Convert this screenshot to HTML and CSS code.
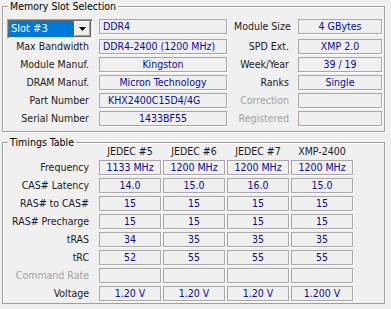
FILE: index.html
```html
<!DOCTYPE html>
<html>
<head>
<meta charset="utf-8">
<link rel="stylesheet" href="styles.css">
</head>
<body>
<fieldset class="group slot-group">
  <legend class="group-title">Memory Slot Selection</legend>
  <div class="slot-grid">
    <div class="combo">
      <span class="combo-value">Slot #3</span>
      <span class="combo-btn"><svg width="7" height="4" viewBox="0 0 7 4"><polygon points="0,0 7,0 3.5,4" fill="#000"/></svg></span>
    </div>
    <div class="field field-left">DDR4</div>
    <div class="label label-right">Module Size</div>
    <div class="field">4 GBytes</div>

    <div class="label">Max Bandwidth</div>
    <div class="field field-left">DDR4-2400 (1200 MHz)</div>
    <div class="label label-right">SPD Ext.</div>
    <div class="field">XMP 2.0</div>

    <div class="label">Module Manuf.</div>
    <div class="field">Kingston</div>
    <div class="label label-right">Week/Year</div>
    <div class="field">39 / 19</div>

    <div class="label">DRAM Manuf.</div>
    <div class="field">Micron Technology</div>
    <div class="label label-right">Ranks</div>
    <div class="field">Single</div>

    <div class="label">Part Number</div>
    <div class="field field-part">KHX2400C15D4/4G</div>
    <div class="label label-right disabled">Correction</div>
    <div class="field"></div>

    <div class="label">Serial Number</div>
    <div class="field">1433BF55</div>
    <div class="label label-right disabled">Registered</div>
    <div class="field"></div>
  </div>
</fieldset>

<fieldset class="group timings-group">
  <legend class="group-title">Timings Table</legend>
  <div class="timings-grid">
    <div class="head-spacer"></div>
    <div class="col-head">JEDEC #5</div>
    <div class="col-head">JEDEC #6</div>
    <div class="col-head">JEDEC #7</div>
    <div class="col-head">XMP-2400</div>

    <div class="label label-timing">Frequency</div>
    <div class="field">1133 MHz</div>
    <div class="field">1200 MHz</div>
    <div class="field">1200 MHz</div>
    <div class="field">1200 MHz</div>

    <div class="label label-timing">CAS# Latency</div>
    <div class="field">14.0</div>
    <div class="field">15.0</div>
    <div class="field">16.0</div>
    <div class="field">15.0</div>

    <div class="label label-timing">RAS# to CAS#</div>
    <div class="field">15</div>
    <div class="field">15</div>
    <div class="field">15</div>
    <div class="field">15</div>

    <div class="label label-timing">RAS# Precharge</div>
    <div class="field">15</div>
    <div class="field">15</div>
    <div class="field">15</div>
    <div class="field">15</div>

    <div class="label label-timing">tRAS</div>
    <div class="field">34</div>
    <div class="field">35</div>
    <div class="field">35</div>
    <div class="field">35</div>

    <div class="label label-timing">tRC</div>
    <div class="field">52</div>
    <div class="field">55</div>
    <div class="field">55</div>
    <div class="field">55</div>

    <div class="label label-timing disabled">Command Rate</div>
    <div class="field"></div>
    <div class="field"></div>
    <div class="field"></div>
    <div class="field"></div>

    <div class="label label-timing">Voltage</div>
    <div class="field">1.20 V</div>
    <div class="field">1.20 V</div>
    <div class="field">1.20 V</div>
    <div class="field">1.200 V</div>
  </div>
</fieldset>
</body>
</html>
```
FILE: styles.css
```css
html, body {
  margin: 0;
  background: #f0f0f0;
}
body {
  padding: 0 6px 0 2px;
  font-family: "DejaVu Sans Condensed", "DejaVu Sans", sans-serif;
  font-stretch: condensed;
  font-size: 10.5px;
  color: #1a1a1a;
}
.group {
  margin: 0;
  min-width: 0;
  border: 1px solid #a0a0a0;
  box-shadow: inset 1px 1px 0 #fff, 1px 1px 0 #fff;
}
.group-title {
  margin-left: 5px;
  padding: 0 2px;
  line-height: 13px;
  background: #f0f0f0;
  color: #000;
}
.slot-group {
  padding: 6px 0 5px 0;
}
.timings-group {
  margin-top: 4px;
  padding: 0 0 2px 0;
}
.slot-grid {
  display: grid;
  grid-template-columns: 89px 128px 57px 84px;
  grid-template-rows: 17px repeat(5, 15px);
  column-gap: 7px;
  row-gap: 3px;
}
.label {
  line-height: 15px;
  text-align: right;
  white-space: nowrap;
  padding-right: 3px;
  color: #1a1a1a;
}
.label-right {
  padding-right: 2px;
}
.label-timing {
  padding-right: 8px;
}
.disabled {
  color: #a0a0a0;
}
.field {
  box-sizing: border-box;
  height: 15px;
  border: 1px solid #a8a8a8;
  box-shadow: 1px 1px 0 #fff;
  line-height: 13px;
  text-align: center;
  color: #0a0a96;
  white-space: nowrap;
  overflow: hidden;
}
.field-left {
  text-align: left;
  padding-left: 3px;
}
.field-part {
  text-align: left;
  padding-left: 8px;
}
.combo {
  box-sizing: border-box;
  width: 86px;
  height: 20px;
  margin-left: 4px;
  display: flex;
  border: 1px solid;
  border-color: #a0a0a0 #fff #fff #a0a0a0;
  box-shadow: inset 1px 1px 0 #696969, inset -1px -1px 0 #e3e3e3;
  padding: 1px;
  background: #fff;
}
.combo-value {
  flex: 1;
  background: #0078d7;
  color: #fff;
  padding-left: 2px;
  line-height: 16px;
  font-size: 11px;
}
.combo-btn {
  box-sizing: border-box;
  width: 17px;
  background: #f0f0f0;
  border-right: 1px solid #696969;
  border-bottom: 1px solid #696969;
  box-shadow: inset 1px 1px 0 #fff, inset -1px -1px 0 #a0a0a0;
  display: flex;
  align-items: center;
  justify-content: center;
}
.timings-grid {
  margin-top: -4px;
  display: grid;
  grid-template-columns: 94px repeat(4, 62px);
  grid-template-rows: 12px repeat(8, 15px);
  column-gap: 2px;
  row-gap: 3px;
}
.col-head {
  text-align: center;
  line-height: 12px;
  color: #1a1a1a;
  white-space: nowrap;
}
```
